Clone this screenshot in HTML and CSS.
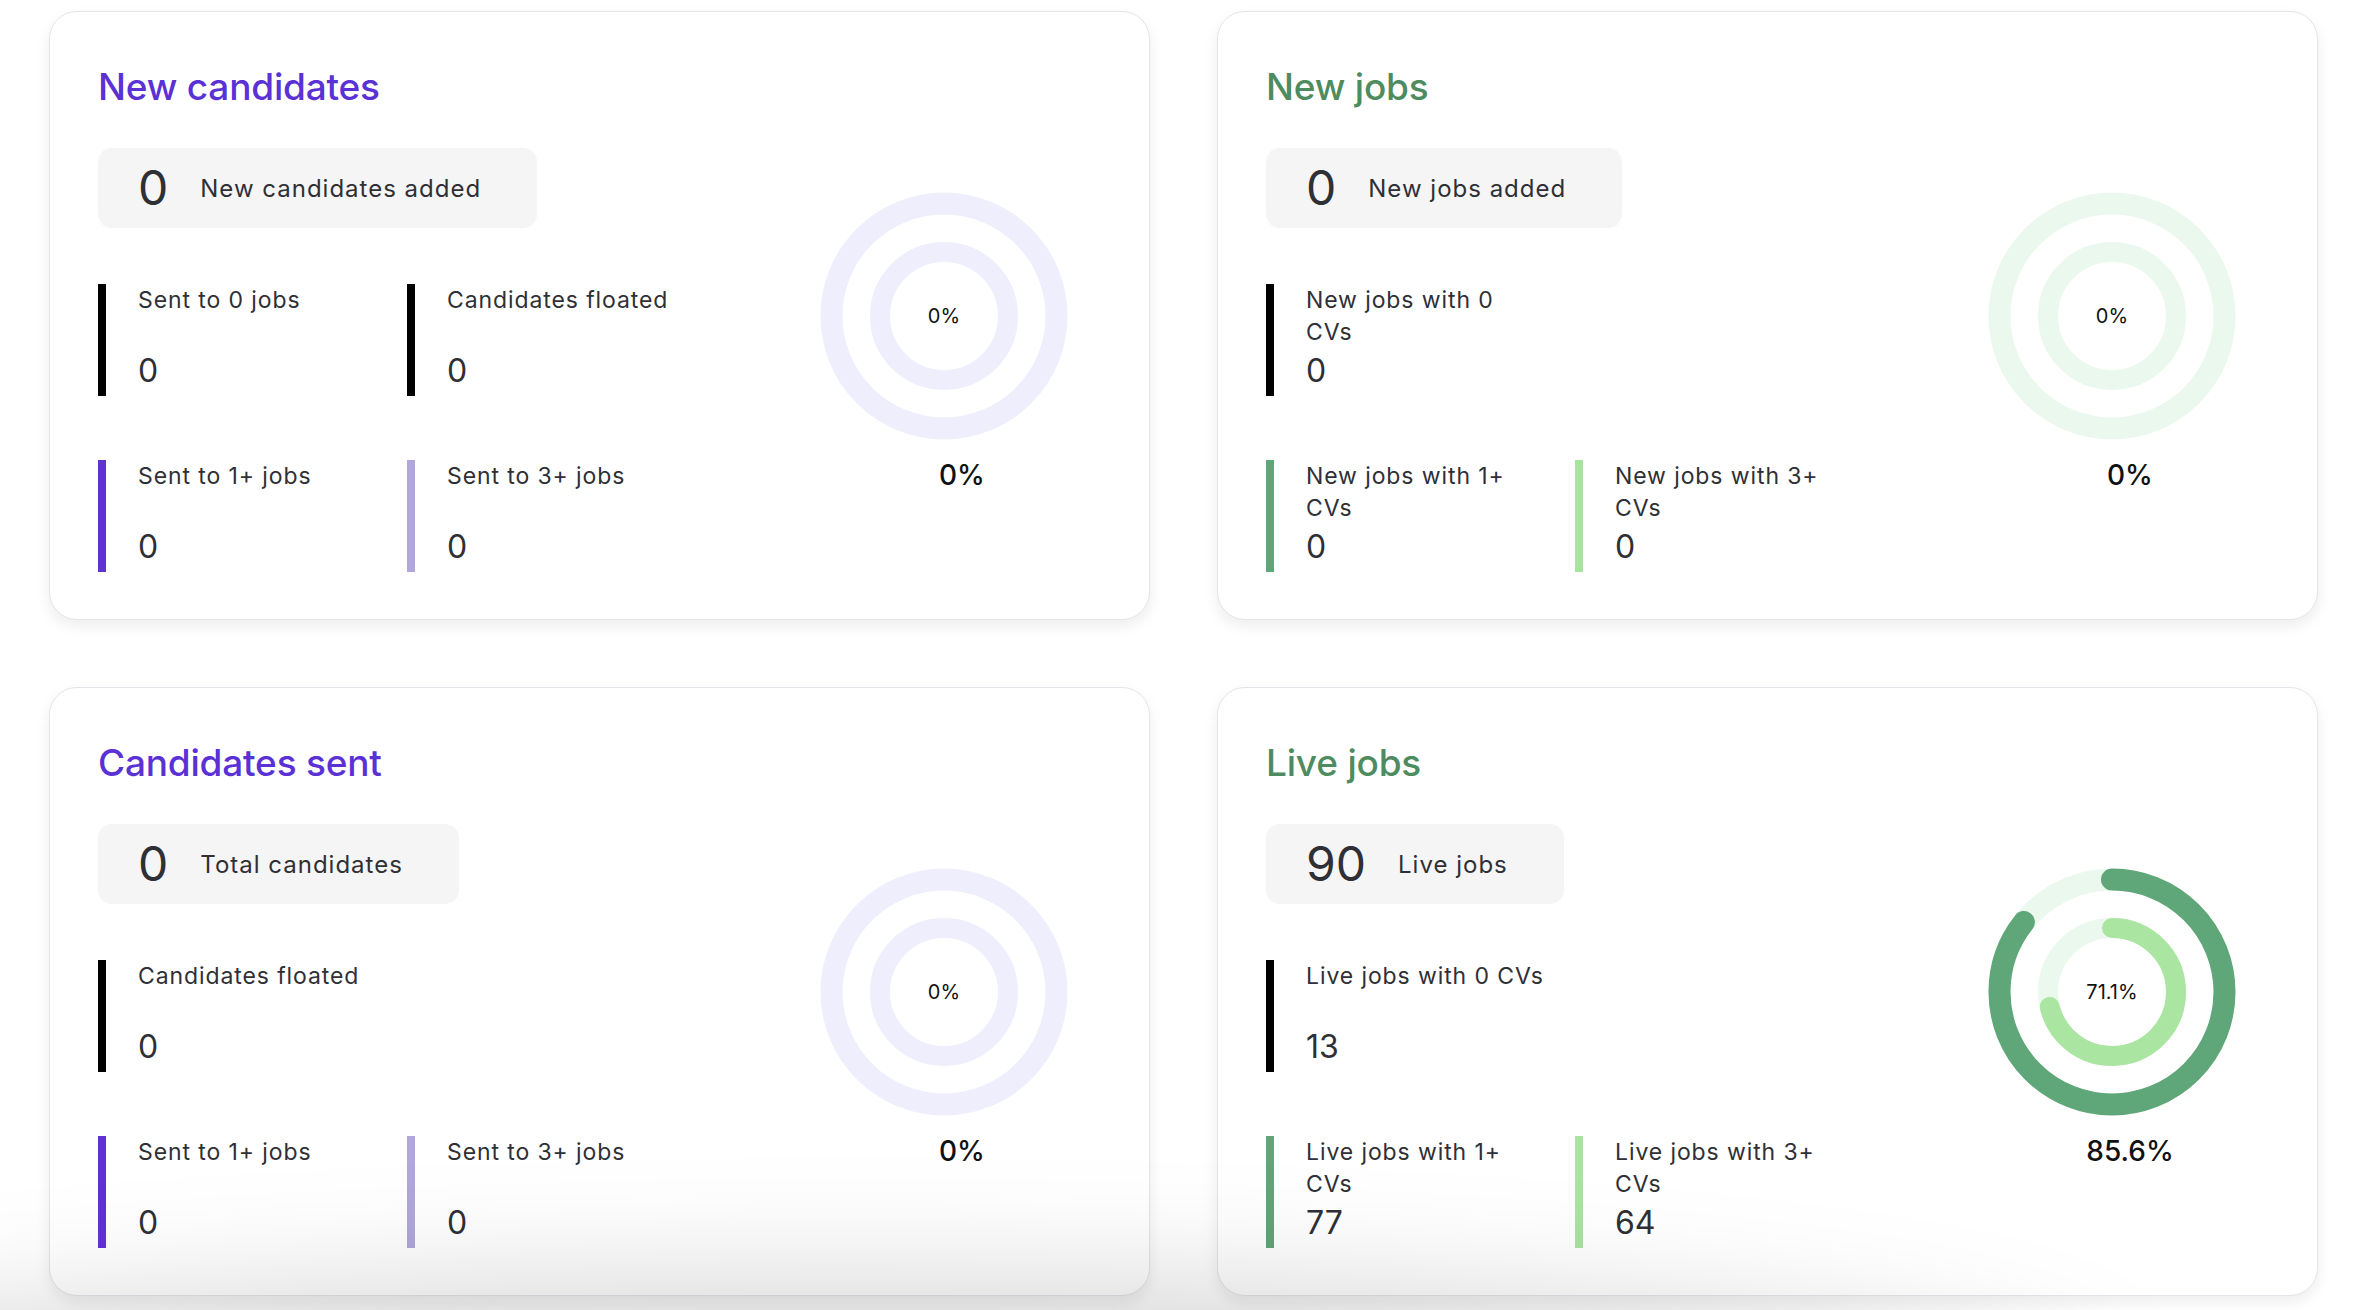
FILE: index.html
```html
<!DOCTYPE html>
<html lang="en">
<head>
<meta charset="utf-8">
<title>Dashboard</title>
<link rel="stylesheet" href="styles.css">
</head>
<body>
<main class="dashboard">

  <section class="card card-purple">
    <div class="card-main">
      <h2 class="card-title">New candidates</h2>
      <div class="pill"><span class="pill-num">0</span><span class="pill-label">New candidates added</span></div>
      <div class="metrics">
        <div class="metric-row">
          <div class="metric bar-black"><div class="metric-label">Sent to 0 jobs</div><div class="metric-value">0</div></div>
          <div class="metric bar-black"><div class="metric-label">Candidates floated</div><div class="metric-value">0</div></div>
        </div>
        <div class="metric-row">
          <div class="metric bar-purple"><div class="metric-label">Sent to 1+ jobs</div><div class="metric-value">0</div></div>
          <div class="metric bar-lilac"><div class="metric-label">Sent to 3+ jobs</div><div class="metric-value">0</div></div>
        </div>
      </div>
    </div>
    <div class="card-chart">
      <div class="donut">
        <svg viewBox="0 0 248 248" width="248" height="248">
          <circle class="track-purple" cx="124" cy="124" r="112.5" stroke-width="22"/>
          <circle class="track-purple" cx="124" cy="124" r="64" stroke-width="20"/>
        </svg>
        <span class="donut-center">0%</span>
      </div>
      <div class="donut-total">0%</div>
    </div>
  </section>

  <section class="card card-green">
    <div class="card-main">
      <h2 class="card-title">New jobs</h2>
      <div class="pill"><span class="pill-num">0</span><span class="pill-label">New jobs added</span></div>
      <div class="metrics">
        <div class="metric-row">
          <div class="metric bar-black"><div class="metric-label">New jobs with 0<br>CVs</div><div class="metric-value">0</div></div>
        </div>
        <div class="metric-row">
          <div class="metric bar-green"><div class="metric-label">New jobs with 1+<br>CVs</div><div class="metric-value">0</div></div>
          <div class="metric bar-mint"><div class="metric-label">New jobs with 3+<br>CVs</div><div class="metric-value">0</div></div>
        </div>
      </div>
    </div>
    <div class="card-chart">
      <div class="donut">
        <svg viewBox="0 0 248 248" width="248" height="248">
          <circle class="track-green" cx="124" cy="124" r="112.5" stroke-width="22"/>
          <circle class="track-green" cx="124" cy="124" r="64" stroke-width="20"/>
        </svg>
        <span class="donut-center">0%</span>
      </div>
      <div class="donut-total">0%</div>
    </div>
  </section>

  <section class="card card-purple">
    <div class="card-main">
      <h2 class="card-title">Candidates sent</h2>
      <div class="pill"><span class="pill-num">0</span><span class="pill-label">Total candidates</span></div>
      <div class="metrics">
        <div class="metric-row">
          <div class="metric bar-black"><div class="metric-label">Candidates floated</div><div class="metric-value">0</div></div>
        </div>
        <div class="metric-row">
          <div class="metric bar-purple"><div class="metric-label">Sent to 1+ jobs</div><div class="metric-value">0</div></div>
          <div class="metric bar-lilac"><div class="metric-label">Sent to 3+ jobs</div><div class="metric-value">0</div></div>
        </div>
      </div>
    </div>
    <div class="card-chart">
      <div class="donut">
        <svg viewBox="0 0 248 248" width="248" height="248">
          <circle class="track-purple" cx="124" cy="124" r="112.5" stroke-width="22"/>
          <circle class="track-purple" cx="124" cy="124" r="64" stroke-width="20"/>
        </svg>
        <span class="donut-center">0%</span>
      </div>
      <div class="donut-total">0%</div>
    </div>
  </section>

  <section class="card card-green">
    <div class="card-main">
      <h2 class="card-title">Live jobs</h2>
      <div class="pill"><span class="pill-num">90</span><span class="pill-label">Live jobs</span></div>
      <div class="metrics">
        <div class="metric-row">
          <div class="metric bar-black"><div class="metric-label">Live jobs with 0 CVs</div><div class="metric-value">13</div></div>
        </div>
        <div class="metric-row">
          <div class="metric bar-green"><div class="metric-label">Live jobs with 1+<br>CVs</div><div class="metric-value">77</div></div>
          <div class="metric bar-mint"><div class="metric-label">Live jobs with 3+<br>CVs</div><div class="metric-value">64</div></div>
        </div>
      </div>
    </div>
    <div class="card-chart">
      <div class="donut">
        <svg viewBox="0 0 248 248" width="248" height="248">
          <circle class="track-green" cx="124" cy="124" r="112.5" stroke-width="22"/>
          <circle class="track-green" cx="124" cy="124" r="64" stroke-width="20"/>
          <circle class="ring-outer" cx="124" cy="124" r="112.5" stroke-width="22" stroke-dasharray="605.07 706.86" transform="rotate(-90 124 124)"/>
          <circle class="ring-inner" cx="124" cy="124" r="64" stroke-width="20" stroke-dasharray="285.91 402.12" transform="rotate(-90 124 124)"/>
        </svg>
        <span class="donut-center">71.1%</span>
      </div>
      <div class="donut-total">85.6%</div>
    </div>
  </section>

</main>
<div class="screen-fade"></div>
</body>
</html>
```

FILE: styles.css
```css
* {
  box-sizing: border-box;
}

html,
body {
  margin: 0;
  background: #ffffff;
}

body {
  width: 2364px;
  height: 1310px;
  overflow: hidden;
  font-family: Inter, "Noto Sans", sans-serif;
  color: #2f3036;
}

.dashboard {
  display: grid;
  grid-template-columns: 1101px 1101px;
  column-gap: 67px;
  row-gap: 67px;
  padding: 11px 0 0 49px;
}

.card {
  display: flex;
  height: 609px;
  padding: 53px 0 0 48px;
  background: #ffffff;
  border: 1px solid #e4e4ea;
  border-radius: 28px;
  box-shadow: 0 6px 14px rgba(20, 20, 40, 0.08);
}

.card-main {
  flex: 1;
  display: flex;
  flex-direction: column;
  align-items: flex-start;
}

.card-title {
  margin: 0;
  font-size: 37px;
  line-height: 44px;
  font-weight: 500;
  letter-spacing: -0.2px;
}

.card-purple .card-title {
  color: #5a31d5;
}

.card-green .card-title {
  color: #4e8b5f;
}

.pill {
  display: flex;
  align-items: center;
  gap: 32px;
  height: 80px;
  margin-top: 39px;
  padding: 0 56px 0 40px;
  background: #f5f5f5;
  border-radius: 14px;
}

.pill-num {
  font-size: 48px;
  line-height: 1;
}

.pill-label {
  font-size: 24px;
  letter-spacing: 1px;
}

.metrics {
  display: flex;
  flex-direction: column;
  gap: 64px;
  margin-top: 56px;
}

.metric-row {
  display: grid;
  grid-template-columns: 309px 309px;
}

.metric {
  display: flex;
  flex-direction: column;
  justify-content: space-between;
  height: 112px;
  padding: 0 0 9px 32px;
  border-left: 8px solid #000000;
}

.metric-label {
  font-size: 23px;
  line-height: 32px;
  letter-spacing: 0.9px;
  white-space: nowrap;
}

.metric-value {
  font-size: 32px;
  line-height: 32px;
}

.bar-black {
  border-left-color: #000000;
}

.bar-purple {
  border-left-color: #5f33d2;
}

.bar-lilac {
  border-left-color: #b1a7dc;
}

.bar-green {
  border-left-color: #5fa679;
}

.bar-mint {
  border-left-color: #a9e3a0;
}

.card-chart {
  display: flex;
  flex-direction: column;
  align-items: center;
  width: 248px;
  margin: 127px 81px 0 0;
}

.donut {
  position: relative;
  width: 248px;
  height: 248px;
}

.donut svg {
  display: block;
}

.donut circle {
  fill: none;
}

.track-purple {
  stroke: #efeefc;
}

.track-green {
  stroke: #ebf8ee;
}

.ring-outer {
  stroke: #5fa679;
  stroke-linecap: round;
}

.ring-inner {
  stroke: #abe5a2;
  stroke-linecap: round;
}

.donut-center {
  position: absolute;
  inset: 0;
  display: flex;
  align-items: center;
  justify-content: center;
  font-size: 20px;
  color: #111111;
}

.donut-total {
  margin-top: 18px;
  padding-left: 36px;
  font-size: 28px;
  line-height: 34px;
  font-weight: 500;
  color: #111111;
}

.screen-fade {
  position: fixed;
  left: -400px;
  bottom: -230px;
  width: 2500px;
  height: 260px;
  border-radius: 50%;
  background: rgba(0, 0, 0, 0.16);
  filter: blur(60px);
  pointer-events: none;
}
```
